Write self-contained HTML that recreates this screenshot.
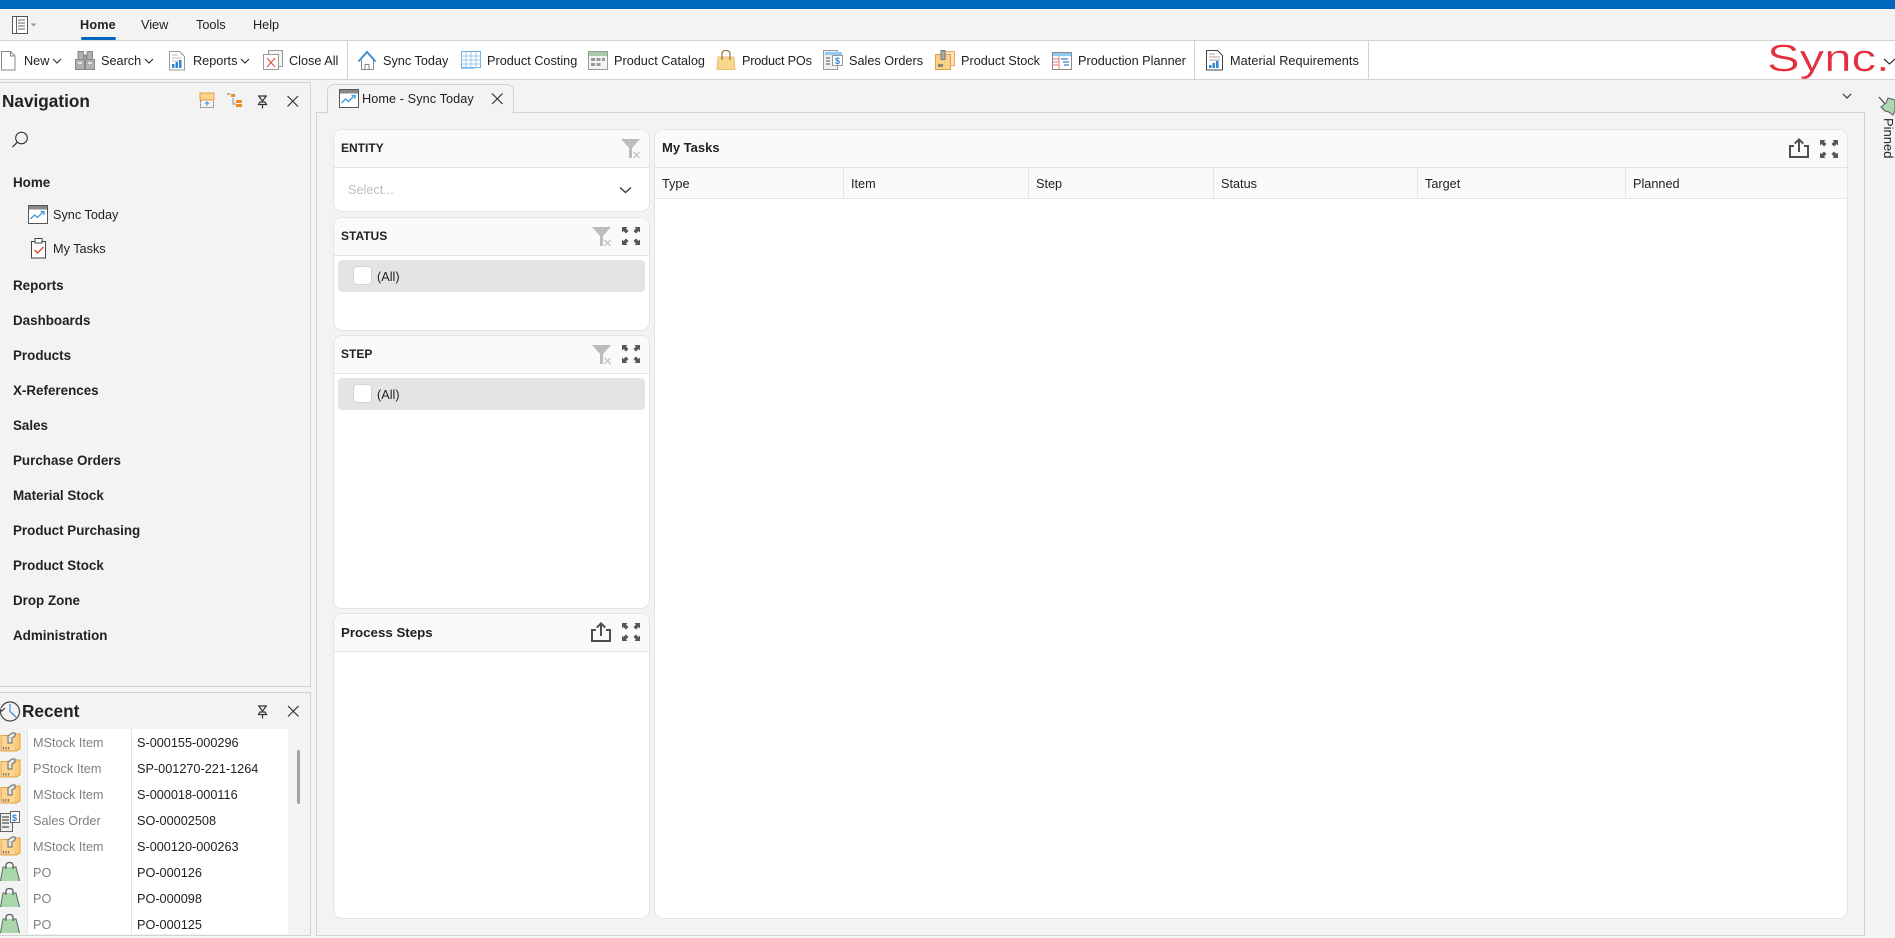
<!DOCTYPE html>
<html><head><meta charset="utf-8"><title>Sync</title>
<style>
html,body{margin:0;padding:0;width:1895px;height:938px;overflow:hidden;background:#f3f3f3}
body{position:relative;font-family:"Liberation Sans",Arial,sans-serif;color:#222}
.a{position:absolute}
.t{position:absolute;white-space:nowrap;line-height:16px;height:16px}
.tb{font-size:12.7px;top:53px}
.m{font-size:12.7px;top:17px}
.n{font-size:13.4px;font-weight:bold;left:13px}
.s{font-size:12.7px;left:53px}
.h{font-size:17.2px;font-weight:bold;color:#222}
.card{position:absolute;background:#fff;border:1px solid #e4e4e4;border-radius:9px;box-sizing:border-box;overflow:hidden}
.card .hd{position:absolute;left:0;right:0;top:0;height:37px;background:#fafafa;border-bottom:1px solid #e4e4e4}
.ct{font-weight:bold;color:#222}
.row{position:absolute;left:338px;width:307px;height:32px;background:#e4e4e4;border-radius:4px}
.cb{position:absolute;width:19px;height:19px;background:#fff;border:1px solid #d4d4d4;border-radius:4px;box-sizing:border-box}
.c1{font-size:12.7px;left:33px;color:#808080}
.c2{font-size:12.7px;left:137px;color:#222}
.col{position:absolute;top:168px;height:31px;width:1px;background:#e4e4e4}
.ch{font-size:12.7px;top:176px}
</style></head>
<body>
<div class="a" style="left:0;top:0;width:1895px;height:9px;background:#0067be"></div>
<div class="a" style="left:0;top:40px;width:1895px;height:40px;background:#fff;border-top:1px solid #d2d2d2;border-bottom:1px solid #d2d2d2;box-sizing:border-box"></div>
<div class="a" style="left:347px;top:41px;width:1px;height:38px;background:#d2d2d2"></div>
<div class="a" style="left:1194px;top:41px;width:1px;height:38px;background:#d2d2d2"></div>
<div class="a" style="left:1368px;top:41px;width:1px;height:38px;background:#d2d2d2"></div>

<div class="t m" style="left:80px;font-weight:bold;letter-spacing:.15px">Home</div>
<div class="t m" style="left:141px">View</div>
<div class="t m" style="left:196px">Tools</div>
<div class="t m" style="left:253px">Help</div>
<div class="a" style="left:81px;top:37px;width:35px;height:3px;background:#0067be;border-radius:2px"></div>

<div class="t tb" style="left:24px">New</div>
<div class="t tb" style="left:101px">Search</div>
<div class="t tb" style="left:193px">Reports</div>
<div class="t tb" style="left:289px">Close All</div>
<div class="t tb" style="left:383px">Sync Today</div>
<div class="t tb" style="left:487px">Product Costing</div>
<div class="t tb" style="left:614px">Product Catalog</div>
<div class="t tb" style="left:742px;letter-spacing:-.2px">Product POs</div>
<div class="t tb" style="left:849px">Sales Orders</div>
<div class="t tb" style="left:961px">Product Stock</div>
<div class="t tb" style="left:1078px">Production Planner</div>
<div class="t tb" style="left:1230px;letter-spacing:.06px">Material Requirements</div>

<!-- navigation panel -->
<div class="a" style="left:-1px;top:82px;width:312px;height:605px;border:1px solid #d2d2d2;box-sizing:border-box"></div>
<div class="t h" style="left:2px;top:93px">Navigation</div>
<div class="t n" style="top:175px">Home</div>
<div class="t s" style="top:207px">Sync Today</div>
<div class="t s" style="top:241px">My Tasks</div>
<div class="t n" style="top:278px">Reports</div>
<div class="t n" style="top:313px">Dashboards</div>
<div class="t n" style="top:348px">Products</div>
<div class="t n" style="top:383px">X-References</div>
<div class="t n" style="top:418px">Sales</div>
<div class="t n" style="top:453px">Purchase Orders</div>
<div class="t n" style="top:488px">Material Stock</div>
<div class="t n" style="top:523px">Product Purchasing</div>
<div class="t n" style="top:558px">Product Stock</div>
<div class="t n" style="top:593px">Drop Zone</div>
<div class="t n" style="top:628px">Administration</div>

<!-- recent panel -->
<div class="a" style="left:-1px;top:692px;width:312px;height:244px;border:1px solid #d2d2d2;box-sizing:border-box"></div>
<div class="t h" style="left:22px;top:703px">Recent</div>
<div class="a" style="left:27px;top:729px;width:261px;height:205px;background:#fff"></div>
<div class="a" style="left:27px;top:729px;width:1px;height:205px;background:#e4e4e4"></div>
<div class="a" style="left:131px;top:729px;width:1px;height:205px;background:#e4e4e4"></div>
<div class="a" style="left:297px;top:750px;width:3px;height:54px;background:#a4a4a4;border-radius:2px"></div>
<div class="t c1" style="top:735px">MStock Item</div><div class="t c2" style="top:735px">S-000155-000296</div>
<div class="t c1" style="top:761px">PStock Item</div><div class="t c2" style="top:761px">SP-001270-221-1264</div>
<div class="t c1" style="top:787px">MStock Item</div><div class="t c2" style="top:787px">S-000018-000116</div>
<div class="t c1" style="top:813px">Sales Order</div><div class="t c2" style="top:813px">SO-00002508</div>
<div class="t c1" style="top:839px">MStock Item</div><div class="t c2" style="top:839px">S-000120-000263</div>
<div class="t c1" style="top:865px">PO</div><div class="t c2" style="top:865px">PO-000126</div>
<div class="t c1" style="top:891px">PO</div><div class="t c2" style="top:891px">PO-000098</div>
<div class="t c1" style="top:917px">PO</div><div class="t c2" style="top:917px">PO-000125</div>

<!-- main panel -->
<div class="a" style="left:316px;top:112px;width:1549px;height:824px;border:1px solid #d2d2d2;box-sizing:border-box"></div>
<div class="a" style="left:327px;top:84px;width:187px;height:30px;background:#f3f3f3;border:1px solid #d2d2d2;border-bottom:none;border-radius:7px 7px 0 0;box-sizing:border-box"></div>
<div class="t" style="left:362px;top:91px;font-size:12.7px;letter-spacing:.08px">Home - Sync Today</div>

<div class="card" style="left:333px;top:129px;width:317px;height:83px"><div class="hd"></div></div>
<div class="card" style="left:333px;top:217px;width:317px;height:114px"><div class="hd"></div></div>
<div class="card" style="left:333px;top:335px;width:317px;height:274px"><div class="hd"></div></div>
<div class="card" style="left:333px;top:613px;width:317px;height:306px"><div class="hd"></div></div>
<div class="card" style="left:654px;top:129px;width:1194px;height:790px"><div class="hd"></div></div>
<div class="a" style="left:655px;top:168px;width:1192px;height:31px;background:#fafafa;border-bottom:1px solid #e4e4e4;box-sizing:border-box"></div>

<div class="t ct" style="left:341px;top:140px;font-size:12px">ENTITY</div>
<div class="t" style="left:348px;top:182px;font-size:12.7px;color:#bdbdbd">Select...</div>
<div class="t ct" style="left:341px;top:228px;font-size:12px">STATUS</div>
<div class="row" style="top:260px"></div>
<div class="cb" style="left:353px;top:266px"></div>
<div class="t" style="left:377px;top:269px;font-size:12.7px">(All)</div>
<div class="t ct" style="left:341px;top:346px;font-size:12px">STEP</div>
<div class="row" style="top:378px"></div>
<div class="cb" style="left:353px;top:384px"></div>
<div class="t" style="left:377px;top:387px;font-size:12.7px">(All)</div>
<div class="t ct" style="left:341px;top:625px;font-size:13.3px">Process Steps</div>
<div class="t ct" style="left:662px;top:140px;font-size:13px">My Tasks</div>

<div class="col" style="left:843px"></div>
<div class="col" style="left:1028px"></div>
<div class="col" style="left:1213px"></div>
<div class="col" style="left:1417px"></div>
<div class="col" style="left:1625px"></div>
<div class="t ch" style="left:662px">Type</div>
<div class="t ch" style="left:851px">Item</div>
<div class="t ch" style="left:1036px">Step</div>
<div class="t ch" style="left:1221px">Status</div>
<div class="t ch" style="left:1425px">Target</div>
<div class="t ch" style="left:1633px">Planned</div>

<div class="a" style="left:1880px;top:118px;writing-mode:vertical-rl;font-size:13px;line-height:16px;white-space:nowrap;color:#222">Pinned</div>

<svg class="a" style="left:0;top:0" width="1895" height="938" viewBox="0 0 1895 938" fill="none">
<defs>
<g id="chev"><path d="M0 0l4 4 4-4" stroke="#333" stroke-width="1.2"/></g>
<g id="exp" fill="#54585b">
<path d="M0 0h5.500L4 1.500l2.500 2.500L4 6.500 1.500 4 0 5.500z"/>
<path d="M18 0h-5.500L14 1.500 11.500 4 14 6.500 16.500 4 18 5.500z"/>
<path d="M0 18h5.500L4 16.500l2.500-2.500L4 11.500 1.500 14 0 12.500z"/>
<path d="M18 18h-5.500l1.500-1.500-2.500-2.500 2.500-2.500 2.500 2.500 1.500-1.500z"/>
</g>
<g id="share" stroke="#4b4f52" stroke-width="2"><path d="M5 8H1v11h18V8h-4"/><path d="M10 14V1.500M5.800 5.600L10 1.400l4.200 4.200"/></g>
<g id="filt"><path d="M0 0h19l-8 9v10H8V9z" fill="#bcbcbc"/><path d="M12.500 13l6 6m0-6l-6 6" stroke="#c4c4c4" stroke-width="1.400"/></g>
<g id="pin" stroke="#333" stroke-width="1.200"><path d="M1 1h9M2.500 1v1l3 4 3-4V1M1.500 9.500L3 7h5l1.500 2.500zM5.500 10v3.500"/></g>
<g id="cross"><path d="M0 0l10.500 10.500M10.500 0L0 10.500" stroke="#333" stroke-width="1.200"/></g>
<g id="box"><rect x="0" y="2.500" width="15" height="15.500" fill="#fbd58e" stroke="#e39f3f"/><path d="M15 18l4-2V1h-5" fill="#fbc97a" stroke="#e39f3f"/><path d="M7 10V3l4-3h3v3l-3 2v5z" fill="#e8e8e8" stroke="#666"/><path d="M2.500 14v2.500M5 14v2.500M7.500 14v2.500" stroke="#777" stroke-width="1.200"/></g>
<g id="bag"><path d="M3 5h13l3.500 14H0z" fill="#a9d6ab"/><path d="M.5 19L3 5h3M19.500 19L16 5h-3" stroke="#5d6d62"/><path d="M6 7V3.500Q6 .5 9.500 .5T13 3.500V7" stroke="#555" stroke-width="1.200"/></g>
<g id="cal"><rect x=".5" y=".5" width="19" height="18" fill="#fff" stroke="#555"/><rect x="1" y="1" width="18" height="3.500" fill="#888"/><path d="M2.500 14l4-4 3 2.500 6-6M12.500 6.500h3.500V10" stroke="#3d9be0" stroke-width="1.300"/></g>
</defs>

<!-- menu icon -->
<rect x="12.500" y="16.500" width="15" height="17" stroke="#555" fill="#fff"/><path d="M16.500 17v16M18 20h7M18 23h7M18 26h7M18 29h7" stroke="#666"/>
<path d="M30.500 23.500h6l-3 3z" fill="#999"/>

<!-- toolbar icons -->
<path d="M1.500 51.500h9l4.500 4.500v14h-13.500z" fill="#fff" stroke="#888"/><path d="M10.500 51.500V56H15" stroke="#888"/>
<use href="#chev" x="53" y="59"/>

<g stroke="#888" fill="#b0b0b0"><rect x="75.500" y="59.500" width="9" height="10"/><rect x="85.500" y="59.500" width="9" height="10"/><rect x="78" y="51.500" width="5.500" height="8"/><rect x="87" y="51.500" width="5.500" height="8"/><rect x="84" y="55" width="2" height="6"/></g><rect x="78" y="62" width="4" height="2" fill="#e2e2e2"/><rect x="88" y="62" width="4" height="2" fill="#e2e2e2"/>
<use href="#chev" x="145" y="59"/>

<path d="M169.500 51.500h10l5 5v13.500h-15z" fill="#fff" stroke="#999"/><path d="M172 55h6M172 58h9M172 61h9" stroke="#bbb"/><path d="M172 64h2.500v4H172zM175.500 62h2.500v6h-2.500zM179 60h2.500v8H179z" fill="#2f86d6"/>
<use href="#chev" x="241" y="59"/>

<rect x="268.500" y="50.500" width="14" height="16" fill="#f4f4f4" stroke="#999"/><rect x="263.500" y="54.500" width="15" height="15" fill="#fff" stroke="#999"/><path d="M267 58l8 9m0-9l-8 9" stroke="#e5493f"/>

<path d="M361.500 60v9.500h12V60" fill="#fff" stroke="#888"/><path d="M358.500 61.500l8.500-9.500 8.500 9.500" stroke="#3f8fd8" stroke-width="2"/><path d="M365 69.500v-5h4v5" stroke="#888"/>

<rect x="461.500" y="51.500" width="19" height="16" fill="#fff" stroke="#6fb0e6"/><path d="M461 56h20M461 60h20M461 64h20M466 52v16M471 52v16M476 52v16" stroke="#9cc9ee"/><path d="M461 68h12l4 1h-16z" fill="#9cc9ee"/>

<rect x="588.500" y="51.500" width="19" height="18" fill="#f4f4f4" stroke="#999"/><rect x="589" y="52" width="18" height="4" fill="#a8cba6"/><path d="M591 58h4v3h-4zM596.500 58h4v3h-4zM602 58h3v3h-3zM591 63h4v3h-4zM596.500 63h4v3h-4z" fill="#999"/>

<path d="M718 57h16l1 12.500h-18z" fill="#f8d68b" stroke="#e9c07c"/><path d="M722 60v-6q0-3.500 4-3.500t4 3.500v6" stroke="#8a5a2b"/>

<rect x="823.500" y="50.500" width="14" height="19" fill="#f0f0f0" stroke="#999"/><rect x="825" y="52" width="17" height="3" fill="#8ccbf3"/><rect x="832.500" y="55.500" width="10" height="10" fill="#fff" stroke="#999"/><text x="835" y="64" font-size="9" font-weight="bold" fill="#2f86d6" font-family="Liberation Sans">$</text><path d="M826 58h4M826 61h4M826 64h4" stroke="#888" stroke-width="1.500"/>

<rect x="941.500" y="51.500" width="13" height="14" fill="#fde0c0" stroke="#e8a868"/><rect x="935.500" y="54.500" width="15" height="15" fill="#f9d488" stroke="#e0a040"/><rect x="941" y="50.500" width="4" height="9" fill="#aaa" stroke="#777"/><path d="M938 64h5v3h-5z" fill="#888"/>

<rect x="1052.500" y="52.500" width="19" height="17" fill="#fff" stroke="#888"/><rect x="1053" y="53" width="18" height="3" fill="#8ccbf3"/><path d="M1053 59h6M1053 62h6M1053 65h6" stroke="#e77"/><path d="M1059 56v13" stroke="#e77"/><path d="M1061 59h7M1063 62h6M1064 65h5" stroke="#357fc7" stroke-width="1.300"/>

<path d="M1206.500 50.500h11l5 5v14.500h-16z" fill="#fff" stroke="#444"/><path d="M1209 54h6M1209 57h11M1209 60h11" stroke="#aaa"/><path d="M1209 65h2.500v3H1209zM1212.500 63h2.500v5h-2.500zM1216 61h2.500v7H1216z" fill="#2f86d6"/>

<!-- logo -->
<text transform="translate(1767 71) scale(1.29 1)" x="0" y="0" font-family="Liberation Sans" font-size="38" fill="#e2303e" stroke="#fff" stroke-width=".35">Sync.</text>
<path d="M1884 59l5.500 5 5.500-5" stroke="#333" stroke-width="1.200"/>
<use href="#chev" x="1843" y="94"/>
<path d="M1879 97l7 8" stroke="#444" stroke-width="1.200"/>
<path d="M1881 107l5-4 2-5 7 2v11l-2 4-4-3-4-1z" fill="#a9d9ae" stroke="#556"/>

<!-- nav header icons -->
<rect x="200.500" y="93.500" width="13" height="14" stroke="#777" stroke-dasharray="2 1"/><rect x="200" y="93" width="14" height="7" fill="#fbd58e" stroke="#eb9a3e"/><path d="M207 106v-4m-2 2l2-2 2 2" stroke="#3d9be0"/>
<path d="M227 94h3" stroke="#666"/><path d="M233 98v6h3" stroke="#888"/><rect x="231" y="94" width="4" height="3" fill="#f08a24"/><rect x="236" y="100" width="6" height="3" fill="#f08a24"/><rect x="236" y="104" width="6" height="3" fill="#f08a24"/>
<use href="#pin" x="257" y="95"/><use href="#cross" x="287.500" y="96"/>
<path d="M12.500 147l5-5" stroke="#222" stroke-width="1.200"/><circle cx="21.500" cy="138" r="5.800" stroke="#222" stroke-width="1"/>
<use href="#cal" x="28" y="205"/>
<path d="M31.500 241.500h14v16.500h-14z" fill="#fff" stroke="#444"/><rect x="35" y="238.500" width="7" height="4.500" fill="#fff" stroke="#444"/><path d="M34.500 250l3 3 6-6" stroke="#e23d32" stroke-width="1.300"/>

<!-- recent -->
<use href="#pin" x="257" y="705"/><use href="#cross" x="288" y="706"/>
<circle cx="10" cy="711.500" r="9.500" stroke="#444" stroke-width="1.200"/><path d="M10 704v7.500l6 5.500" stroke="#3d8dd6" stroke-width="1.200"/><path d="M-1 708l3 3 3-3" stroke="#444" stroke-width="1.200" fill="#f3f3f3"/>
<use href="#box" x="1" y="733"/><use href="#box" x="1" y="759"/><use href="#box" x="1" y="785"/><use href="#box" x="1" y="837"/>
<rect x=".5" y="813.500" width="12" height="18" fill="#eee" stroke="#666"/><path d="M2 817h7M2 820h7M2 823h7M2 827h7" stroke="#555" stroke-width="1.300"/><rect x="10.500" y="811.500" width="9" height="11" fill="#fff" stroke="#666"/><text x="12" y="821" font-size="9" font-weight="bold" fill="#2f86d6" font-family="Liberation Sans">$</text>
<svg x="0" y="729" width="27" height="205" viewBox="0 729 27 205"><use href="#bag" x="0" y="862"/><use href="#bag" x="0" y="888"/><use href="#bag" x="0" y="914"/></svg>

<!-- main -->
<use href="#cal" x="339" y="89"/>
<use href="#cross" x="492" y="93.500"/>
<use href="#filt" x="621" y="139"/>
<path d="M620 187.500l5.500 5 5.500-5" stroke="#333" stroke-width="1.300"/>
<use href="#filt" x="592" y="227"/><use href="#exp" x="622" y="227"/>
<use href="#filt" x="592" y="345"/><use href="#exp" x="622" y="345"/>
<use href="#share" x="591" y="622"/><use href="#exp" x="622" y="623"/>
<use href="#share" x="1789" y="138"/><use href="#exp" x="1820" y="140"/>
</svg>
</body></html>
